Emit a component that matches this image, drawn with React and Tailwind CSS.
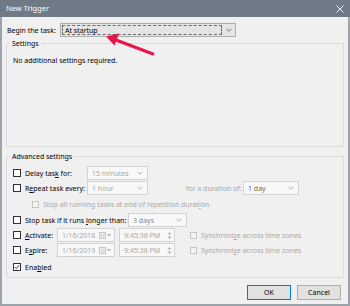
import React from "react";

const Chev = ({ c = "#8a8a8a" }) => (
  <svg width="6" height="4" viewBox="0 0 6 4" className="shrink-0">
    <path d="M0.6 0.8 L3 3.2 L5.4 0.8" fill="none" stroke={c} strokeWidth="0.8" />
  </svg>
);

const Box = ({ disabled, checked }) => (
  <span
    className={
      disabled
        ? "w-[7px] h-[7px] border border-[#c4c4c4] bg-[#f4f4f4] shrink-0 flex items-center justify-center"
        : "w-[8px] h-[8px] border border-[#333333] bg-white shrink-0 flex items-center justify-center"
    }
  >
    {checked && (
      <svg width="6" height="6" viewBox="0 0 6 6">
        <path d="M0.8 3.1 L2.3 4.6 L5.2 1.2" fill="none" stroke="#222" strokeWidth="0.9" />
      </svg>
    )}
  </span>
);

const Combo = ({ w, text, tc }) => (
  <div className={"h-[14px] flex items-center justify-between border border-[#d3d3d3] bg-[#f8f8f8] pl-[4px] pr-[4px] " + w}>
    <span className={tc}>{text}</span>
    <Chev c="#a0a0a0" />
  </div>
);

const Cal = () => (
  <svg width="7" height="7" viewBox="0 0 7 7" className="shrink-0">
    <rect x="0.5" y="0.5" width="6" height="6" fill="none" stroke="#b8b8b8" strokeWidth="0.8" />
    <path d="M0.5 2.2 H6.5 M2.5 2.2 V6.5 M4.5 2.2 V6.5 M0.5 4.3 H6.5" stroke="#c8c8c8" strokeWidth="0.6" />
  </svg>
);

const Spin = () => (
  <svg width="5" height="9" viewBox="0 0 5 9" className="shrink-0">
    <path d="M0.5 3.5 L2.5 1 L4.5 3.5 Z" fill="#b0b0b0" />
    <path d="M0.5 5.5 L2.5 8 L4.5 5.5 Z" fill="#b0b0b0" />
  </svg>
);

const U = ({ children }) => <span className="underline underline-offset-[1px]">{children}</span>;

const DateRow = ({ label, date, mt }) => (
  <div className={"h-[14px] flex items-center " + mt}>
    <Box />
    <span className="ml-[4px] w-[32px]">{label}</span>
    <div className="w-[58px] h-[14px] border border-[#d3d3d3] bg-[#f8f8f8] flex items-center pl-[4px] pr-[3px]">
      <span className="text-[#a8a8a8] flex-1">{date}</span>
      <Cal />
      <svg width="4" height="3" viewBox="0 0 4 3" className="ml-[1px]">
        <path d="M0 0 H4 L2 2.5 Z" fill="#b0b0b0" />
      </svg>
    </div>
    <div className="ml-[4px] w-[56px] h-[14px] border border-[#d3d3d3] bg-[#f8f8f8] flex items-center pl-[4px] pr-[2px]">
      <span className="text-[#a8a8a8] flex-1">9:45:38 PM</span>
      <Spin />
    </div>
    <span className="ml-[15px]">
      <Box disabled />
    </span>
    <span className="ml-[4px] text-[#a8a8a8]">
      Synchroni<U>z</U>e across time zones
    </span>
  </div>
);

export default function App() {
  return (
    <div className="relative w-[350px] h-[306px] flex flex-col bg-[#f0f0f0] text-black overflow-hidden font-['Noto_Sans',sans-serif] text-[7px] leading-[9px]">
      <div className="h-[17px] shrink-0 bg-[#6f7a86] flex items-center justify-between pl-[6px] pr-[6px] text-white text-[7.5px]">
        <span>New Trigger</span>
        <svg width="8" height="8" viewBox="0 0 8 8">
          <path d="M0.5 0.5 L7.5 7.5 M7.5 0.5 L0.5 7.5" stroke="#ffffff" strokeWidth="0.9" />
        </svg>
      </div>
      <div className="flex-1 flex flex-col border-x-2 border-b-2 border-[#9da3aa] pl-[4px] pr-[4px]">
        <div className="mt-[6px] h-[14px] flex items-center">
          <span className="ml-[1px] w-[53px]">Begin the task:</span>
          <div className="w-[176px] h-[14px] flex items-center border border-[#adadad] bg-[#e5e5e5]">
            <div className="ml-[1px] w-[160px] h-[10px] border border-dashed border-[#6a6a6a] flex items-center pl-[2px]">
              At startup
            </div>
            <div className="flex-1 flex justify-center">
              <Chev c="#555" />
            </div>
          </div>
        </div>

        <fieldset className="mt-[2px] h-[108px] border border-[#dcdcdc] pl-[3px] pr-[3px] min-w-0">
          <legend className="px-[2px]">Settings</legend>
          <div className="pl-[3px] mt-[8px]">No additional settings required.</div>
        </fieldset>

        <fieldset className="mt-[5px] h-[126px] border border-[#dcdcdc] pl-[3px] pr-[3px] min-w-0">
          <legend className="px-[2px]">Advanced settings</legend>
          <div className="pl-[3px] flex flex-col">
            <div className="mt-[5px] h-[14px] flex items-center">
              <Box />
              <span className="ml-[4px] w-[62px]">
                Delay tas<U>k</U> for:
              </span>
              <Combo w="w-[61px]" text="15 minutes" tc="text-[#a8a8a8]" />
            </div>
            <div className="mt-[1px] h-[14px] flex items-center">
              <Box />
              <span className="ml-[4px] w-[62px]">
                R<U>e</U>peat task every:
              </span>
              <Combo w="w-[61px]" text="1 hour" tc="text-[#a8a8a8]" />
              <span className="ml-[38px] w-[57px] text-[#a8a8a8]">for a duration of:</span>
              <Combo w="w-[56px]" text="1 day" tc="text-[#6a6a6a]" />
            </div>
            <div className="mt-[2px] h-[14px] flex items-center pl-[19px]">
              <Box disabled />
              <span className="ml-[4px] text-[#a8a8a8]">
                Stop all running tasks at end of repetition durat<U>i</U>on
              </span>
            </div>
            <div className="mt-[2px] h-[14px] flex items-center">
              <Box />
              <span className="ml-[4px] w-[103px]">
                Stop task if it runs <U>l</U>onger than:
              </span>
              <Combo w="w-[59px]" text="3 days" tc="text-[#8a8a8a]" />
            </div>
            <DateRow label={<><U>A</U>ctivate:</>} date="1/16/2018" mt="mt-[1px]" />
            <DateRow label={<>E<U>x</U>pire:</>} date="1/16/2019" mt="mt-[1px]" />
            <div className="mt-[3px] h-[14px] flex items-center">
              <Box checked />
              <span className="ml-[4px]">
                Ena<U>b</U>led
              </span>
            </div>
          </div>
        </fieldset>

        <div className="mt-[7px] flex justify-end gap-[6px] pr-[3px]">
          <button className="w-[44px] h-[15px] border border-[#0078d7] bg-[#e1e1e1] flex items-center justify-center">
            OK
          </button>
          <button className="w-[44px] h-[15px] border border-[#adadad] bg-[#e1e1e1] flex items-center justify-center">
            Cancel
          </button>
        </div>
      </div>

      <svg className="absolute left-0 top-0 pointer-events-none" width="350" height="306" viewBox="0 0 350 306">
        <path d="M153 54 L116 40" stroke="#e8174b" strokeWidth="3" strokeLinecap="round" />
        <polygon points="106,36.5 119,33.5 114.5,45.5" fill="#e8174b" />
      </svg>
    </div>
  );
}
